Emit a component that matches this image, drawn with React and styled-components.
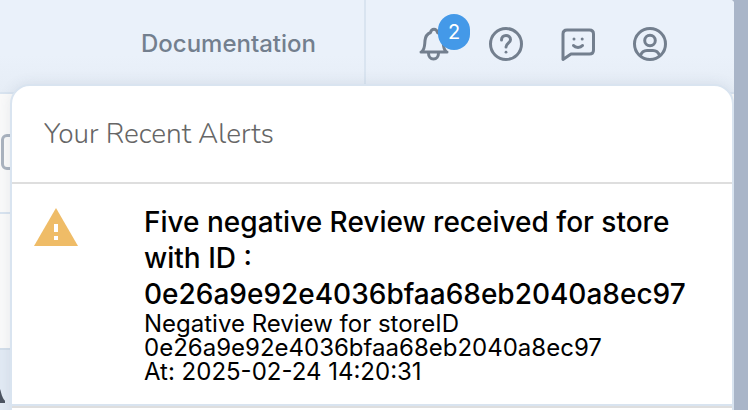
import React from 'react';
import styled, { createGlobalStyle } from 'styled-components';

const GlobalStyle = createGlobalStyle`
  * {
    box-sizing: border-box;
  }

  body {
    margin: 0;
    overflow: hidden;
    font-family: Inter, "Liberation Sans", sans-serif;
    background: #a9b5c8;
  }
`;

const Page = styled.div`
  display: flex;
  flex-direction: column;
  position: relative;
  min-height: 100vh;
  margin-right: 14px;
  overflow: hidden;
  border-top-right-radius: 4px;
  background: #fafafa;
`;

const Header = styled.header`
  display: flex;
  justify-content: flex-end;
  height: 94px;
  border-bottom: 2px solid #d9e4f0;
  background: linear-gradient(#eaf1fa 60%, #e6edf6);
`;

const Nav = styled.nav`
  display: flex;
  align-items: center;
  padding: 0 48px 4px;
  border-right: 2px solid #d9e4f0;

  a {
    color: #737f8e;
    font-size: 24px;
    font-weight: 500;
    line-height: 32px;
    text-decoration: none;
  }
`;

const Actions = styled.div`
  display: flex;
  align-items: center;
  gap: 32px;
  padding: 0 64px 4px 48px;
`;

const IconButton = styled.button`
  position: relative;
  display: flex;
  width: 40px;
  height: 40px;
  padding: 0;
  border: none;
  background: none;
  color: #737f8e;
  cursor: pointer;

  svg {
    width: 40px;
    height: 40px;
    fill: none;
    stroke: currentColor;
    stroke-width: 3;
    stroke-linecap: round;
    stroke-linejoin: round;
  }
`;

const Badge = styled.span`
  position: absolute;
  top: -10px;
  left: 24px;
  width: 32px;
  height: 36px;
  border-radius: 16px;
  background: #4499e8;
  color: #fff;
  font-family: Inter, "Liberation Sans", sans-serif;
  font-size: 20px;
  line-height: 36px;
  text-align: center;
`;

const Filters = styled.div`
  display: flex;
  align-items: flex-start;
  height: 120px;
  padding-top: 40px;
  border-bottom: 2px solid #d9e4f0;

  input {
    appearance: none;
    width: 36px;
    height: 36px;
    margin: 0 0 0 1px;
    border: 3px solid #aab3bf;
    border-radius: 6px;
    background: #fafafa;
  }
`;

const Row = styled.div`
  height: 136px;
  border-bottom: 2px solid #d3deea;
`;

const Footer = styled.div`
  flex: 1;
  display: flex;
  align-items: flex-end;
  min-height: 60px;
  padding-bottom: 6px;
  background: #e2eaf4;

  svg {
    width: 6px;
    height: 18px;
  }
`;

const Alerts = styled.section`
  position: absolute;
  top: 84px;
  left: 10px;
  right: 0;
  bottom: -24px;
  overflow: hidden;
  border: 2px solid #d9e4f0;
  border-radius: 20px;
  background: #fff;
  box-shadow: 0 0 14px rgba(60, 80, 110, 0.1);
`;

const AlertsTitle = styled.h2`
  margin: 0;
  padding: 32px;
  border-bottom: 2px solid #dedede;
  color: #666;
  font-family: Nunito, "Open Sans", sans-serif;
  font-size: 28px;
  font-weight: 300;
  line-height: 32px;
`;

const Alert = styled.article`
  display: grid;
  grid-template-columns: 110px 1fr;
  padding: 20px 22px;
  border-bottom: 2px solid #d9e4f0;
  color: #000;

  > svg {
    width: 44px;
    height: 38px;
    margin-top: 4px;
  }
`;

const AlertHeading = styled.h3`
  margin: 0;
  font-size: 28px;
  font-weight: 500;
  line-height: 36px;
`;

const AlertText = styled.p`
  margin: 0;
  font-size: 24px;
  line-height: 24px;
`;

const Divider = styled.hr`
  margin: 0;
  border: none;
  border-top: 2px solid #dedede;
`;

const Bell = () => (
  <svg viewBox="0 0 40 40" aria-hidden="true">
    <path d="M7 28h26M8 27.500c3-3 2.500-6 3-11 .4-4 2-6.500 5.500-8 1-4.500 6-4.500 7 0 3.500 1.500 5.100 4 5.500 8 .5 5 0 8 3 11" />
    <path d="M14.500 29c0 3.500 2 6 5 6s5-2.500 5-6" />
  </svg>
);

const Help = () => (
  <svg viewBox="0 0 40 40" aria-hidden="true">
    <circle cx="20" cy="20" r="15.500" />
    <path d="M15.500 16c0-2.800 2-4.500 4.500-4.500s4.500 1.700 4.500 4.200c0 3.300-4.500 3.800-4.500 7.300" />
    <circle cx="20" cy="28.200" r="1.400" fill="currentColor" stroke="none" />
  </svg>
);

const Feedback = () => (
  <svg viewBox="0 0 40 40" aria-hidden="true">
    <path d="M5 35.500V10q0-4 4-4h22.500q4 0 4 4v16q0 4-4 4H13Z" />
    <path d="M15.500 21.500c2 2.500 7 2.500 9 0" />
    <circle cx="16" cy="15" r="1.500" fill="currentColor" stroke="none" />
    <circle cx="24.200" cy="15" r="1.500" fill="currentColor" stroke="none" />
  </svg>
);

const Account = () => (
  <svg viewBox="0 0 40 40" aria-hidden="true">
    <circle cx="20" cy="20" r="15.500" />
    <circle cx="20" cy="16.500" r="5.300" />
    <path d="M10.500 31.500c1-3 3.500-5 6.500-5h6c3 0 5.500 2 6.500 5" />
  </svg>
);

const Warning = () => (
  <svg viewBox="0 0 44 38" role="img" aria-label="Warning">
    <path d="M22 0 44 38H0Z" fill="#efbc67" />
    <path d="M20 16h4v8h-4zM20 28h4v4h-4z" fill="#fff" />
  </svg>
);

const App = () => {
  return (
    <>
      <GlobalStyle />
      <Page>
        <Header>
          <Nav>
            <a href="#documentation">Documentation</a>
          </Nav>
          <Actions>
            <IconButton type="button" aria-label="Alerts">
              <Bell />
              <Badge>2</Badge>
            </IconButton>
            <IconButton type="button" aria-label="Help">
              <Help />
            </IconButton>
            <IconButton type="button" aria-label="Feedback">
              <Feedback />
            </IconButton>
            <IconButton type="button" aria-label="Account">
              <Account />
            </IconButton>
          </Actions>
        </Header>

        <Filters>
          <input type="checkbox" aria-label="Select all" />
        </Filters>
        <Row />
        <Footer>
          <svg viewBox="0 0 6 18" aria-hidden="true">
            <path d="M0 3c1 2 1 5 3 9 1 2 2 2 2 3v2H0Z" fill="#4c5461" />
          </svg>
        </Footer>

        <Alerts>
          <AlertsTitle>Your Recent Alerts</AlertsTitle>
          <Alert>
            <Warning />
            <div>
              <AlertHeading>
                Five negative Review received for store with ID : 0e26a9e92e4036bfaa68eb2040a8ec97
              </AlertHeading>
              <AlertText>
                Negative Review for storeID 0e26a9e92e4036bfaa68eb2040a8ec97
                <br />
                At: 2025-02-24 14:20:31
              </AlertText>
            </div>
          </Alert>
          <Divider />
        </Alerts>
      </Page>
    </>
  );
};

export default App;
